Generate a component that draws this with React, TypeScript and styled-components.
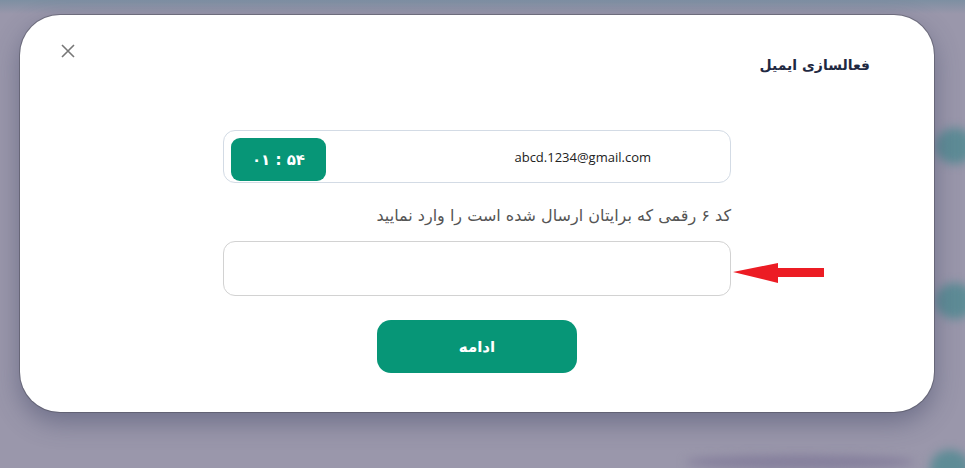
import styled, { createGlobalStyle } from "styled-components";

const GlobalStyle = createGlobalStyle`
  html, body {
    margin: 0;
    padding: 0;
    width: 965px;
    height: 468px;
    overflow: hidden;
  }
  body {
    font-family: "DejaVu Sans", "Noto Sans", sans-serif;
  }
`;

const Page = styled.div`
  position: relative;
  width: 965px;
  height: 468px;
  overflow: hidden;
  background: linear-gradient(180deg, #7d8fa2 0px, #9a97ab 14px, #9a97ab 100%);
`;

// blurred page content sitting behind the dialog
const Blur = styled.div<{ $x: number; $y: number; $w: number; $h: number; $c: string }>`
  position: absolute;
  left: ${(p) => p.$x}px;
  top: ${(p) => p.$y}px;
  width: ${(p) => p.$w}px;
  height: ${(p) => p.$h}px;
  background: ${(p) => p.$c};
  border-radius: 50%;
  filter: blur(5px);
`;

const Modal = styled.div`
  position: relative;
  margin: 15px 0 0 20px;
  width: 914px;
  height: 397px;
  background: #fff;
  border-radius: 40px;
  box-shadow: 0 0 0 1px rgba(80, 80, 92, 0.55), 0 10px 26px rgba(55, 62, 95, 0.45);
  display: flex;
  flex-direction: column;
  direction: rtl;
`;

const Header = styled.div`
  display: flex;
  justify-content: space-between;
  align-items: flex-start;
  padding: 29px 64px 0 41px;
  height: 31px;
`;

const Title = styled.h2`
  margin: 11px 0 0;
  font-size: 14px;
  line-height: 20px;
  font-weight: 700;
  color: #1f2942;
`;

const Close = styled.button`
  border: none;
  background: none;
  padding: 0;
  width: 14px;
  height: 14px;
  cursor: pointer;
  display: flex;
`;

const Body = styled.div`
  width: 508px;
  margin: 55px auto 0;
  display: flex;
  flex-direction: column;
`;

const EmailBox = styled.div`
  box-sizing: border-box;
  height: 53px;
  border: 1px solid #d3dbe5;
  border-radius: 12px;
  padding: 7px 79px 1px 7px;
  display: flex;
  align-items: flex-start;
  justify-content: space-between;
`;

const Email = styled.span`
  direction: ltr;
  font-family: "Open Sans", "Noto Sans", sans-serif;
  font-size: 13px;
  color: #222;
  line-height: 20px;
  margin-top: 9px;
`;

const Timer = styled.div`
  width: 95px;
  height: 43px;
  border-radius: 9px;
  background: #079677;
  color: #fff;
  font-weight: 700;
  font-size: 15px;
  display: flex;
  align-items: center;
  justify-content: center;
  direction: ltr;
`;

const Label = styled.p`
  margin: 23px 0 0;
  font-size: 16px;
  line-height: 20px;
  color: #555;
`;

const Field = styled.div`
  position: relative;
  margin-top: 15px;
`;

const Input = styled.input`
  box-sizing: border-box;
  width: 100%;
  height: 55px;
  border: 1px solid #d2d2d2;
  border-radius: 12px;
  outline: none;
  font-size: 15px;
  padding: 0 14px;
  display: block;
`;

const Arrow = styled.svg`
  position: absolute;
  left: calc(100% + 2px);
  top: 22px;
`;

const Submit = styled.button`
  align-self: center;
  margin-top: 24px;
  width: 200px;
  height: 53px;
  border: none;
  border-radius: 14px;
  background: #079677;
  color: #fff;
  font-family: "DejaVu Sans", sans-serif;
  font-size: 15px;
  font-weight: 700;
  cursor: pointer;
`;

function App() {
  return (
    <>
      <GlobalStyle />
      <Page>
        <Blur $x={935} $y={128} $w={40} $h={36} $c="#5e8c96" />
        <Blur $x={935} $y={283} $w={40} $h={36} $c="#5e8c96" />
        <Blur $x={930} $y={450} $w={40} $h={36} $c="#5e8c96" />
        <Blur $x={685} $y={455} $w={230} $h={14} $c="#857f9c" />
        <Modal>
          <Header>
            <Title>فعالسازی ایمیل</Title>
            <Close aria-label="close">
              <svg width="14" height="14" viewBox="0 0 14 14">
                <path d="M1 1 L13 13 M13 1 L1 13" stroke="#777" strokeWidth="1.6" />
              </svg>
            </Close>
          </Header>
          <Body>
            <EmailBox>
              <Email>abcd.1234@gmail.com</Email>
              <Timer>۰۱ : ۵۴</Timer>
            </EmailBox>
            <Label>کد ۶ رقمی که برایتان ارسال شده است را وارد نمایید</Label>
            <Field>
              <Input />
              <Arrow width="91" height="20" viewBox="0 0 91 20">
                <polygon points="0,9 45,0 45,5 91,5 91,14 45,14 45,20" fill="#ec1c24" />
              </Arrow>
            </Field>
            <Submit>ادامه</Submit>
          </Body>
        </Modal>
      </Page>
    </>
  );
}

export default App;
